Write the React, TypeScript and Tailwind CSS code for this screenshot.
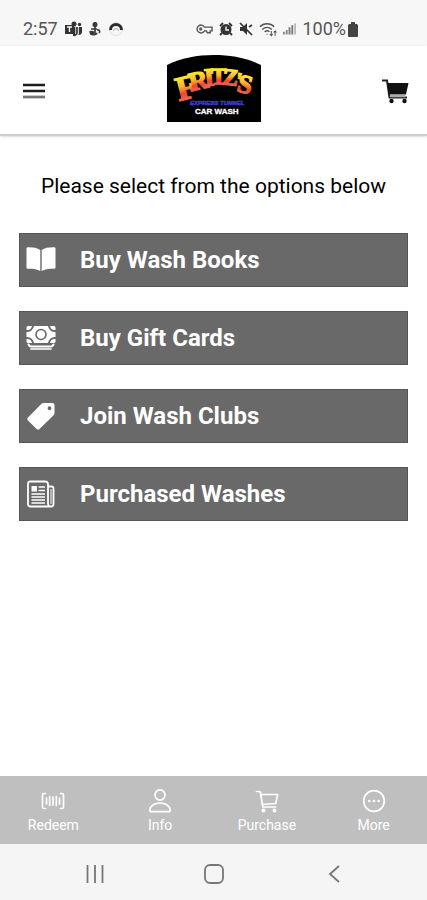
import type { ReactNode } from "react";

type Item = { label: string; icon: ReactNode };

function Logo() {
  return (
    <svg width="94" height="67" viewBox="0 0 94 67" role="img" aria-label="Fritz's Express Tunnel Car Wash">
      <defs>
        <linearGradient id="fire" x1="0" y1="0" x2="0" y2="1">
          <stop offset="0.2" stopColor="#ffe92e" />
          <stop offset="0.45" stopColor="#ffb52c" />
          <stop offset="0.65" stopColor="#f0442c" />
          <stop offset="0.9" stopColor="#e87872" />
        </linearGradient>
      </defs>
      <path d="M0 67V10C14 3 30 0 47 0s33 3 47 10v57z" fill="#000" />
      <g fill="url(#fire)" stroke="url(#fire)" strokeWidth="1.4" fontFamily="'Liberation Serif', serif" fontWeight="700">
        <text x="12" y="46" fontSize="34" transform="rotate(-14 12 46)">F</text>
        <text x="24" y="36" fontSize="26" transform="rotate(-12 24 36)">R</text>
        <text x="38" y="31" fontSize="25" transform="rotate(-5 38 31)">I</text>
        <text x="44" y="29" fontSize="23">T</text>
        <text x="55" y="29" fontSize="23" transform="rotate(7 55 29)">Z</text>
        <text x="67" y="32" fontSize="22" transform="rotate(12 67 32)">'</text>
        <text x="69" y="36" fontSize="26" transform="rotate(14 69 36)">S</text>
      </g>
      <text x="23" y="50" fontSize="6" fontStyle="italic" fontWeight="700" fontFamily="'Liberation Sans', sans-serif" fill="#4444dd" stroke="#3636c4" strokeWidth="0.6">
        EXPRESS TUNNEL
      </text>
      <text x="28" y="59" fontSize="8" fontWeight="700" fontFamily="'Liberation Sans', sans-serif" fill="#fff" stroke="#fff" strokeWidth="0.3">
        CAR WASH
      </text>
    </svg>
  );
}

function StatusBar() {
  return (
    <div className="flex h-[46px] items-end justify-between bg-[#f7f7f7] pr-[69px] pb-[7px] pl-[23px] text-[#555]">
      <div className="flex h-5 items-center gap-[7px]">
        <span className="text-lg leading-5">2:57</span>
        <svg width="17" height="16" viewBox="0 0 17 16" fill="#333">
          <circle cx="9" cy="3" r="2.5" />
          <circle cx="14.5" cy="3.5" r="1.7" />
          <path d="M8 6h5v6a4 4 0 0 1-5 3zM13.5 6H17v5a3 3 0 0 1-3.5 3z" />
          <path d="M0 4h9v9H0z" />
          <path d="M2 6h5M4.5 6v5" stroke="#fff" strokeWidth="1.3" />
          <path d="M10.7 6v7M13.3 6v7" stroke="#f7f7f7" strokeWidth="0.8" />
        </svg>
        <svg width="12" height="14" viewBox="0 0 12 14" fill="none" stroke="#3c3c3c" strokeWidth="1.7">
          <circle cx="6" cy="2.5" r="1.7" fill="#3c3c3c" />
          <path d="M6 3v9M2 7h6M1 9c1 5 6 4 7 2M8 8c3-1 3 2 2 3" />
          <circle cx="3" cy="11" r="1.5" fill="#3c3c3c" />
        </svg>
        <svg width="16" height="14" viewBox="0 0 16 14" fill="none">
          <circle cx="8" cy="7" r="6.5" stroke="#ddd" />
          <path d="M2.5 8a5.5 5.5 0 0 1 11 0" stroke="#2b2b2b" strokeWidth="3" />
          <path d="M5.5 9a2.5 2.5 0 0 1 5 0" stroke="#aaa" />
        </svg>
      </div>
      <div className="flex h-5 items-center gap-[6px]">
        <svg width="17" height="12" viewBox="0 0 18 12" fill="none" stroke="#555" strokeWidth="1.5">
          <path d="M9 4a4.2 4.2 0 1 0 0 4h2l1 2h3V8h2V4z" />
          <circle cx="5" cy="6" r="1" />
        </svg>
        <svg width="14" height="14" viewBox="0 0 14 14" fill="none" stroke="#333">
          <circle cx="7" cy="7.5" r="4.5" fill="#333" strokeWidth="2" />
          <path d="M7 4.5V8h3" stroke="#f7f7f7" strokeWidth="1.4" />
          <path d="M1 4l3-3M10 1l3 3M3 11l-2 2M11 11l2 2" strokeWidth="1.8" />
        </svg>
        <svg width="14" height="14" viewBox="0 0 14 14" fill="#333">
          <path d="M1 5h3l4-4v12L4 9H1z" />
          <path d="M1 1l12 12M10 5l3-2" stroke="#333" strokeWidth="1.7" />
        </svg>
        <svg width="18" height="15" viewBox="0 0 19 15" fill="none" stroke="#555" strokeWidth="1.5">
          <path d="M1 4.5c4-4 11-4 15 0M3.5 7.5c3-3 7-3 10 0M6 10c2-1.5 3.5-1.5 5 0" />
          <path d="M8.5 12v1M13 9v5M11.5 12.5l1.5 1.5 1.5-1.5M17 14V9M15.5 10.5L17 9l1.5 1.5" strokeWidth="1.1" />
        </svg>
        <svg width="13" height="14" viewBox="0 0 14 14">
          <path d="M0 13v-3h2v3zM3 13V8h2v5z" fill="#888" />
          <path d="M6 13V5h2v8zM9 13V3h2v10z" fill="#777" />
          <path d="M12 13V1h2v12z" fill="#bbb" />
        </svg>
        <span className="flex items-center gap-0.5 text-lg leading-5">
          100%
          <svg width="10" height="15" viewBox="0 0 10 15" fill="#444">
            <path d="M3 0h4v2h1.5A1.5 1.5 0 0 1 10 3.5V14a1 1 0 0 1-1 1H1a1 1 0 0 1-1-1V3.5A1.5 1.5 0 0 1 1.5 2H3z" />
          </svg>
        </span>
      </div>
    </div>
  );
}

function Header() {
  return (
    <header className="flex h-[90px] items-center justify-between border-b-2 border-[#cfcfcf] bg-white px-[18px] pb-1 shadow-sm">
      <button aria-label="Menu" className="grid w-8 place-items-center pt-1.5">
        <svg width="22" height="16" viewBox="0 0 22 16">
          <path d="M0 2h22M0 8h22" stroke="#1c1c1c" strokeWidth="2.4" />
          <path d="M0 14h22" stroke="#777" strokeWidth="2.8" />
        </svg>
      </button>
      <Logo />
      <button aria-label="Cart" className="flex w-8 justify-end pt-1.5">
        <svg width="27" height="25" viewBox="0 0 27 25" fill="none">
          <path d="M0 1.5h5l2.5 17H25" stroke="#222" strokeWidth="2" />
          <path d="M5 4h21.5L24 15.5H7z" fill="#111" />
          <path d="M8 17h15.5" stroke="#aaa" strokeWidth="2.5" />
          <circle cx="9.5" cy="22" r="2.2" fill="#111" />
          <circle cx="22.5" cy="22" r="2.2" fill="#111" />
        </svg>
      </button>
    </header>
  );
}

const options: Item[] = [
  {
    label: "Buy Wash Books",
    icon: (
      <svg width="30" height="28" viewBox="0 0 30 28" fill="#fff">
        <path d="M14.3 4C11 1.5 6 1 1.8 1.2A1.3 1.3 0 0 0 .5 2.500v19a1.300 1.300 0 0 0 1.300 1.300c4.500-.2 9 .2 12.500 2.200zM15.700 4C19 1.500 24 1 28.200 1.200a1.300 1.300 0 0 1 1.300 1.300v19a1.300 1.300 0 0 1-1.300 1.300c-4.500-.2-9 .2-12.500 2.200z" />
      </svg>
    ),
  },
  {
    label: "Buy Gift Cards",
    icon: (
      <svg width="30" height="28" viewBox="0 0 30 28" fill="none">
        <path d="M8 2h14a7 7 0 0 0 7.500 6v5A7 7 0 0 0 22 19H8A7 7 0 0 0 .5 13V8A7 7 0 0 0 8 2z" fill="#fff" />
        <path d="M.5 6V3.500A1.500 1.500 0 0 1 2 2h4a5 5 0 0 1-5.500 4zM29.500 6V3.500A1.500 1.500 0 0 0 28 2h-4a5 5 0 0 0 5.500 4zM.5 15v2.500A1.500 1.500 0 0 0 2 19h4a5 5 0 0 0-5.500-4zM29.500 15v2.500A1.500 1.500 0 0 1 28 19h-4a5 5 0 0 1 5.500-4z" fill="#fff" />
        <circle cx="15" cy="10.5" r="5" stroke="#696969" strokeWidth="1.6" />
        <path d="M2.500 20.500q1 2 2.500 2h20q1.500 0 2.500-2" stroke="#fff" strokeWidth="2" strokeLinecap="round" />
        <path d="M5 25h20" stroke="#ddd" strokeWidth="1.8" strokeLinecap="round" />
      </svg>
    ),
  },
  {
    label: "Join Wash Clubs",
    icon: (
      <svg width="30" height="28" viewBox="0 0 30 28">
        <path fillRule="evenodd" d="M17.500 1h8.800A2.200 2.200 0 0 1 28.500 3.200v7.800a3 3 0 0 1-.9 2.200L13.500 27a2 2 0 0 1-2.900 0L2 18.500a2 2 0 0 1 0-2.900L15.500 1.800a3 3 0 0 1 2-.8zM23.500 4.300a1.900 1.900 0 1 0 0 3.800 1.900 1.900 0 0 0 0-3.800z" fill="#fff" />
      </svg>
    ),
  },
  {
    label: "Purchased Washes",
    icon: (
      <svg width="30" height="28" viewBox="0 0 30 28" fill="none" stroke="#fff" strokeWidth="1.8">
        <path d="M22 23.500V4a2.500 2.500 0 0 0-2.500-2.500h-15A2.500 2.500 0 0 0 2 4v20a2.500 2.500 0 0 0 2.500 2.500H25a3 3 0 0 1-3-3zM22 6.500h3.500A2 2 0 0 1 27.500 8.500V24a2.500 2.500 0 0 1-2.500 2.500" />
        <path d="M25 9v15" strokeWidth="1" />
        <path d="M5.500 6H11v5.500H5.500z" fill="#fff" stroke="none" />
        <path d="M12.500 7H19M12.500 10.500H19M5.500 14H19M5.500 17H19M5.500 20H19M5.500 23H19" strokeWidth="1.5" />
      </svg>
    ),
  },
];

const tabs: Item[] = [
  {
    label: "Redeem",
    icon: (
      <svg width="24" height="24" viewBox="0 0 24 24" fill="none" stroke="#fff" strokeWidth="1.7" strokeLinecap="round" strokeLinejoin="round">
        <path d="M4.500 4.500H3A1.500 1.500 0 0 0 1.500 6v12A1.500 1.500 0 0 0 3 19.500h1.500M19.500 4.500H21A1.500 1.500 0 0 1 22.500 6v12a1.500 1.500 0 0 1-1.500 1.500h-1.500" />
        <path d="M5.500 9v6M8.700 7.500v9M12 8v8M15.300 7.500v9M18.500 9v6" />
      </svg>
    ),
  },
  {
    label: "Info",
    icon: (
      <svg width="24" height="24" viewBox="0 0 24 24" fill="none" stroke="#fff" strokeWidth="1.7" strokeLinejoin="round">
        <ellipse cx="12" cy="6" rx="5" ry="5.2" />
        <path d="M12 14c-5 0-9.500 2.500-10.200 7-.2 1 .2 1.700 1.200 1.700h18c1 0 1.400-.7 1.200-1.700-.7-4.500-5.200-7-10.200-7z" />
      </svg>
    ),
  },
  {
    label: "Purchase",
    icon: (
      <svg width="24" height="24" viewBox="0 0 24 24" fill="none" stroke="#fff" strokeWidth="1.7" strokeLinecap="round" strokeLinejoin="round">
        <path d="M1.500 2.500h3.700l2.600 15.500H20.500M5.700 5.500h17l-2 9-13.500 1" />
        <circle cx="8.5" cy="21.5" r="1.2" />
        <circle cx="19.5" cy="21.5" r="1.2" />
      </svg>
    ),
  },
  {
    label: "More",
    icon: (
      <svg width="24" height="24" viewBox="0 0 24 24" fill="none" stroke="#fff" strokeWidth="1.7">
        <circle cx="12" cy="12" r="10.3" />
        <g fill="#fff" stroke="none">
          <circle cx="7.3" cy="12" r="1.3" />
          <circle cx="12" cy="12" r="1.3" />
          <circle cx="16.7" cy="12" r="1.3" />
        </g>
      </svg>
    ),
  },
];

function SystemNav() {
  return (
    <div className="grid h-14 grid-cols-[1fr_auto_1fr] items-center bg-[#f5f5f5] px-[84px] pt-1">
      <button aria-label="Recent apps" className="justify-self-start">
        <svg width="22" height="20" viewBox="0 0 22 20" stroke="#777" strokeWidth="1.8">
          <path d="M3.500 1v18M11 1v18M18.500 1v18" />
        </svg>
      </button>
      <button aria-label="Home">
        <svg width="20" height="20" viewBox="0 0 20 20" fill="none" stroke="#777" strokeWidth="1.8">
          <rect x="1" y="1" width="18" height="18" rx="5" />
        </svg>
      </button>
      <button aria-label="Back" className="justify-self-end">
        <svg width="18" height="20" viewBox="0 0 18 20" fill="none" stroke="#777" strokeWidth="1.8">
          <path d="M14 2L5 10l9 8" />
        </svg>
      </button>
    </div>
  );
}

export default function App() {
  return (
    <div className="flex min-h-screen flex-col bg-white font-[Roboto,sans-serif]">
      <StatusBar />
      <Header />
      <main className="flex-1 px-[19px] pt-9">
        <h1 className="text-center text-[21px] leading-7 text-black">Please select from the options below</h1>
        <div className="mt-[33px] flex flex-col gap-6">
          {options.map((o) => (
            <button
              key={o.label}
              className="flex h-[54px] w-full items-center gap-6 border border-[#555] bg-[#696969] pl-1.5 text-left text-2xl font-bold text-white"
            >
              {o.icon}
              {o.label}
            </button>
          ))}
        </div>
      </main>
      <nav className="grid h-[68px] grid-cols-4 bg-[#bfbfbf] pt-[13px]">
        {tabs.map((t) => (
          <a key={t.label} href="#" className="flex flex-col items-center gap-1 text-sm leading-4 text-white">
            {t.icon}
            {t.label}
          </a>
        ))}
      </nav>
      <SystemNav />
    </div>
  );
}
